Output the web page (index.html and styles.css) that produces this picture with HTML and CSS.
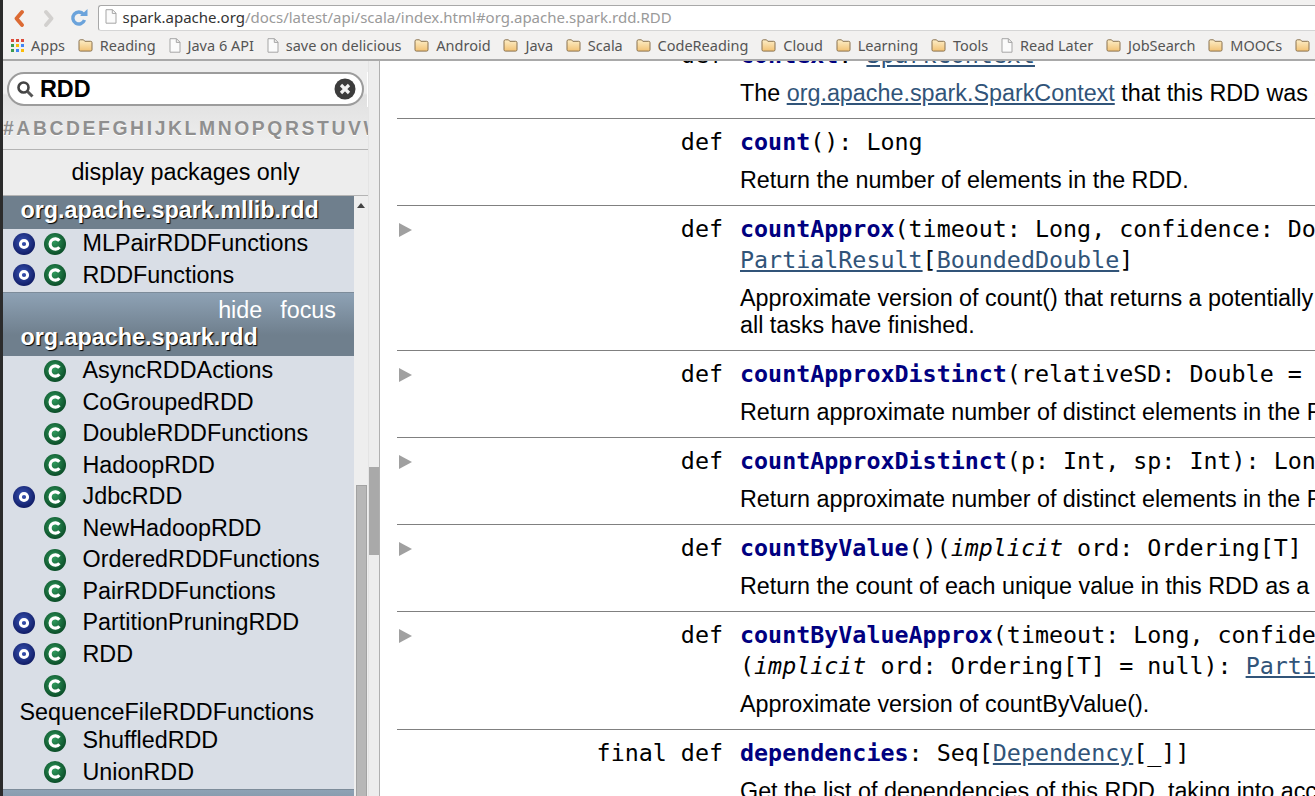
FILE: index.html
```html
<!DOCTYPE html>
<html lang="en">

<head>
    <meta charset="UTF-8">
    <title>org.apache.spark.rdd.RDD</title>
    <link rel="stylesheet" href="styles.css">
</head>

<body>
    <svg class="defs" width="0" height="0">
        <defs>
            <radialGradient id="blueBall" cx="45%" cy="40%" r="60%">
                <stop offset="0" stop-color="#3a55b5" />
                <stop offset="1" stop-color="#101c66" />
            </radialGradient>
            <radialGradient id="greenBall" cx="45%" cy="40%" r="60%">
                <stop offset="0" stop-color="#2f9a5c" />
                <stop offset="1" stop-color="#0b4d28" />
            </radialGradient>
            <linearGradient id="folderFill" x1="0" y1="0" x2="0" y2="1">
                <stop offset="0" stop-color="#fdeec8" />
                <stop offset="1" stop-color="#f2c274" />
            </linearGradient>
        </defs>
        <symbol id="icon-object" viewBox="0 0 22 22">
            <circle cx="11" cy="11" r="11" fill="url(#blueBall)" />
            <circle cx="11" cy="11" r="3.600" fill="none" stroke="#fff" stroke-width="3" />
        </symbol>
        <symbol id="icon-class" viewBox="0 0 22 22">
            <circle cx="11" cy="11" r="11" fill="url(#greenBall)" />
            <path d="M15.400 7.800a5.200 5.200 0 1 0 0 6.400" fill="none" stroke="#fff" stroke-width="3.200" />
        </symbol>
        <symbol id="icon-folder" viewBox="0 0 15 14">
            <path d="M1 3.200c0-.8.5-1.400 1.300-1.400h3.200l1.300 1.500h5.900c.8 0 1.300.5 1.300 1.300v7.200c0 .8-.5 1.300-1.300 1.300H2.300c-.8 0-1.300-.5-1.300-1.300z" fill="url(#folderFill)" stroke="#8a7350" />
        </symbol>
        <symbol id="icon-page" viewBox="0 0 12 15">
            <path d="M1 .7h6.500L11 4.200v10H1zM7.300 .7v3.700H11" fill="#fbfbfb" stroke="#a5a5a5" />
        </symbol>
    </svg>

    <header class="browser">
        <div class="toolbar">
            <svg class="nav-btn back" width="12" height="18" viewBox="0 0 12 18">
                <path d="M9 3 3.500 9.500 9 16" fill="none" stroke="#dc6a33" stroke-width="3.800" stroke-linecap="round" stroke-linejoin="round" />
            </svg>
            <svg class="nav-btn forward" width="12" height="18" viewBox="0 0 12 18">
                <path d="m3 3 5.500 6.500L3 16" fill="none" stroke="#d2d0ce" stroke-width="3.800" stroke-linecap="round" stroke-linejoin="round" />
            </svg>
            <svg class="nav-btn reload" width="18" height="18" viewBox="0 0 18 18">
                <path d="M13.500 5.200A6 6 0 1 0 14.500 11" fill="none" stroke="#6ba3db" stroke-width="3.400" />
                <path d="M10 7h7.500V0z" fill="#6ba3db" />
            </svg>
            <div class="address">
                <svg class="page-icon" width="12" height="15">
                    <use href="#icon-page" />
                </svg>
                <span class="host">spark.apache.org</span><span class="path">/docs/latest/api/scala/index.html#org.apache.spark.rdd.RDD</span>
            </div>
        </div>
        <nav class="bookmarks">
            <div class="mark apps">
                <svg width="13" height="13" viewBox="0 0 13 13">
                    <rect width="3" height="3" fill="#dd4b39" />
                    <rect x="5" width="3" height="3" fill="#dd4b39" />
                    <rect x="10" width="3" height="3" fill="#dd4b39" />
                    <rect y="5" width="3" height="3" fill="#3c9a4e" />
                    <rect x="5" y="5" width="3" height="3" fill="#fbbc05" />
                    <rect x="10" y="5" width="3" height="3" fill="#4285f4" />
                    <rect y="10" width="3" height="3" fill="#3c9a4e" />
                    <rect x="5" y="10" width="3" height="3" fill="#4285f4" />
                    <rect x="10" y="10" width="3" height="3" fill="#fbbc05" />
                </svg>
                Apps
            </div>
            <div class="mark"><svg class="folder"><use href="#icon-folder" /></svg>Reading</div>
            <div class="mark"><svg class="page"><use href="#icon-page" /></svg>Java 6 API</div>
            <div class="mark"><svg class="page"><use href="#icon-page" /></svg>save on delicious</div>
            <div class="mark"><svg class="folder"><use href="#icon-folder" /></svg>Android</div>
            <div class="mark"><svg class="folder"><use href="#icon-folder" /></svg>Java</div>
            <div class="mark"><svg class="folder"><use href="#icon-folder" /></svg>Scala</div>
            <div class="mark"><svg class="folder"><use href="#icon-folder" /></svg>CodeReading</div>
            <div class="mark"><svg class="folder"><use href="#icon-folder" /></svg>Cloud</div>
            <div class="mark"><svg class="folder"><use href="#icon-folder" /></svg>Learning</div>
            <div class="mark"><svg class="folder"><use href="#icon-folder" /></svg>Tools</div>
            <div class="mark"><svg class="page"><use href="#icon-page" /></svg>Read Later</div>
            <div class="mark"><svg class="folder"><use href="#icon-folder" /></svg>JobSearch</div>
            <div class="mark"><svg class="folder"><use href="#icon-folder" /></svg>MOOCs</div>
            <div class="mark"><svg class="folder"><use href="#icon-folder" /></svg></div>
        </nav>
    </header>

    <div class="layout">
        <aside class="sidebar">
            <div class="sidebar-main">
                <div class="filter">
                    <div class="search">
                        <svg width="18" height="18" viewBox="0 0 18 18">
                            <circle cx="7.500" cy="7.500" r="5" fill="none" stroke="#444" stroke-width="2.600" />
                            <path d="m11.500 11.500 5 5" stroke="#555" stroke-width="3" />
                        </svg>
                        <span class="query">RDD</span>
                        <svg class="clear" width="22" height="22" viewBox="0 0 22 22">
                            <circle cx="11" cy="11" r="10.500" fill="#3c3c3c" />
                            <path d="m7 7 8 8m0-8-8 8" stroke="#f2f2f2" stroke-width="3.200" />
                        </svg>
                    </div>
                    <div class="letters">#ABCDEFGHIJKLMNOPQRSTUVW</div>
                </div>
                <div class="display-only">display packages only</div>

                <div class="tree">
                    <div class="packages">
                        <div class="pack-name flat">org.apache.spark.mllib.rdd</div>
                        <ul class="entries">
                            <li><span class="icons"><svg class="ball"><use href="#icon-object" /></svg><svg class="ball"><use href="#icon-class" /></svg></span>MLPairRDDFunctions</li>
                            <li><span class="icons"><svg class="ball"><use href="#icon-object" /></svg><svg class="ball"><use href="#icon-class" /></svg></span>RDDFunctions</li>
                        </ul>
                        <div class="pack-head">
                            <div class="pack-links"><span>hide</span><span>focus</span></div>
                            <div class="pack-name">org.apache.spark.rdd</div>
                        </div>
                        <ul class="entries">
                            <li><span class="icons only-class"><svg class="ball"><use href="#icon-class" /></svg></span>AsyncRDDActions</li>
                            <li><span class="icons only-class"><svg class="ball"><use href="#icon-class" /></svg></span>CoGroupedRDD</li>
                            <li><span class="icons only-class"><svg class="ball"><use href="#icon-class" /></svg></span>DoubleRDDFunctions</li>
                            <li><span class="icons only-class"><svg class="ball"><use href="#icon-class" /></svg></span>HadoopRDD</li>
                            <li><span class="icons"><svg class="ball"><use href="#icon-object" /></svg><svg class="ball"><use href="#icon-class" /></svg></span>JdbcRDD</li>
                            <li><span class="icons only-class"><svg class="ball"><use href="#icon-class" /></svg></span>NewHadoopRDD</li>
                            <li><span class="icons only-class"><svg class="ball"><use href="#icon-class" /></svg></span>OrderedRDDFunctions</li>
                            <li><span class="icons only-class"><svg class="ball"><use href="#icon-class" /></svg></span>PairRDDFunctions</li>
                            <li><span class="icons"><svg class="ball"><use href="#icon-object" /></svg><svg class="ball"><use href="#icon-class" /></svg></span>PartitionPruningRDD</li>
                            <li><span class="icons"><svg class="ball"><use href="#icon-object" /></svg><svg class="ball"><use href="#icon-class" /></svg></span>RDD</li>
                            <li class="long"><span class="icons only-class"><svg class="ball"><use href="#icon-class" /></svg></span><span class="long-name">SequenceFileRDDFunctions</span></li>
                            <li><span class="icons only-class"><svg class="ball"><use href="#icon-class" /></svg></span>ShuffledRDD</li>
                            <li><span class="icons only-class"><svg class="ball"><use href="#icon-class" /></svg></span>UnionRDD</li>
                        </ul>
                        <div class="pack-head"></div>
                    </div>
                    <div class="tree-scroll">
                        <div class="up-arrow"></div>
                        <div class="tree-thumb"></div>
                    </div>
                </div>
            </div>
            <div class="outer-scroll">
                <div class="outer-thumb"></div>
            </div>
        </aside>

        <main class="content">
            <ol class="members">
                <li class="member">
                    <div class="kind"><span></span>def</div>
                    <div class="body">
                        <div class="sig"><b>context</b>: <a>SparkContext</a></div>
                        <div class="comment">The <a>org.apache.spark.SparkContext</a> that this RDD was created on.</div>
                    </div>
                </li>
                <li class="member">
                    <div class="kind"><span></span>def</div>
                    <div class="body">
                        <div class="sig"><b>count</b>(): Long</div>
                        <div class="comment">Return the number of elements in the RDD.</div>
                    </div>
                </li>
                <li class="member">
                    <div class="kind"><span class="arrow"></span>def</div>
                    <div class="body">
                        <div class="sig"><b>countApprox</b>(timeout: Long, confidence: Double = 0.95):</div>
                        <div class="sig"><a>PartialResult</a>[<a>BoundedDouble</a>]</div>
                        <div class="comment">Approximate version of count() that returns a potentially incomplete result within a timeout, even if not<br>all tasks have finished.</div>
                    </div>
                </li>
                <li class="member">
                    <div class="kind"><span class="arrow"></span>def</div>
                    <div class="body">
                        <div class="sig"><b>countApproxDistinct</b>(relativeSD: Double = 0.05): Long</div>
                        <div class="comment">Return approximate number of distinct elements in the RDD.</div>
                    </div>
                </li>
                <li class="member">
                    <div class="kind"><span class="arrow"></span>def</div>
                    <div class="body">
                        <div class="sig"><b>countApproxDistinct</b>(p: Int, sp: Int): Long</div>
                        <div class="comment">Return approximate number of distinct elements in the RDD.</div>
                    </div>
                </li>
                <li class="member">
                    <div class="kind"><span class="arrow"></span>def</div>
                    <div class="body">
                        <div class="sig"><b>countByValue</b>()(<i>implicit</i> ord: Ordering[T] = null): Map[T, Long]</div>
                        <div class="comment">Return the count of each unique value in this RDD as a local map of (value, count) pairs.</div>
                    </div>
                </li>
                <li class="member">
                    <div class="kind"><span class="arrow"></span>def</div>
                    <div class="body">
                        <div class="sig"><b>countByValueApprox</b>(timeout: Long, confidence: Double = 0.95)</div>
                        <div class="sig">(<i>implicit</i> ord: Ordering[T] = null): <a>PartialResult</a>[Map[T, BoundedDouble]]</div>
                        <div class="comment">Approximate version of countByValue().</div>
                    </div>
                </li>
                <li class="member">
                    <div class="kind"><span></span>final def</div>
                    <div class="body">
                        <div class="sig"><b>dependencies</b>: Seq[<a>Dependency</a>[_]]</div>
                        <div class="comment">Get the list of dependencies of this RDD, taking into account whether the RDD is checkpointed or not.</div>
                    </div>
                </li>
            </ol>
        </main>
    </div>
</body>

</html>
```
FILE: styles.css
```css
* {
    box-sizing: border-box;
}

html,
body {
    margin: 0;
    padding: 0;
    height: 796px;
    overflow: hidden;
}

body {
    font-family: "Liberation Sans", Arial, sans-serif;
    background-color: #fff;
    color: #000;
    border-left: 3px solid #2b2b2b;
}

ul,
ol {
    list-style: none;
    margin: 0;
    padding: 0;
}

.defs {
    display: block;
    height: 0;
}

/* browser chrome */
.browser {
    background-color: #f2f1f0;
    border-bottom: 2px solid #a9a9a9;
    height: 61px;
}

.toolbar {
    display: flex;
    align-items: center;
    height: 31px;
    padding-top: 4px;
}

.nav-btn {
    flex: none;
}

.back {
    margin-left: 10px;
}

.forward {
    margin-left: 18px;
}

.reload {
    margin-left: 15px;
}

.address {
    flex: 1;
    display: flex;
    align-items: center;
    height: 26px;
    margin-left: 10px;
    padding: 0 0 2px 6px;
    background-color: #fff;
    border: 1px solid #a8a8a8;
    border-bottom-color: #d5d5d5;
    border-right: none;
    border-radius: 3px 0 0 3px;
    font-family: "Noto Sans", sans-serif;
    font-size: 15px;
    white-space: nowrap;
}

.page-icon {
    flex: none;
    margin-right: 5.500px;
}

.host {
    color: #333;
}

.path {
    color: #9a9a9a;
}

.bookmarks {
    display: flex;
    align-items: center;
    gap: 12.800px;
    height: 28px;
    padding-left: 8px;
    font-family: "Noto Sans", sans-serif;
    font-size: 14.500px;
    color: #555;
    white-space: nowrap;
    overflow: hidden;
}

.mark {
    display: flex;
    align-items: center;
    gap: 7px;
    flex: none;
}

.folder {
    width: 15px;
    height: 14px;
}

.page {
    width: 12px;
    height: 15px;
}

.layout {
    display: flex;
    height: 735px;
}

/* left navigation */
.sidebar {
    flex: none;
    display: flex;
    width: 377px;
    height: 735px;
    background-color: #ededed;
    border-right: 1px solid #b0b0b0;
}

.sidebar-main {
    width: 365px;
    display: flex;
    flex-direction: column;
    overflow: hidden;
}

.filter {
    height: 89px;
    border-bottom: 1px solid #b4b4b4;
    background: linear-gradient(#fff, #fff) right 11px / 1px 35px no-repeat,
        linear-gradient(#eeeeee 0, #eeeeee 32px, #e0e0e0 34px, #ededed 80px);
    padding-top: 11px;
}

.search {
    display: flex;
    align-items: center;
    height: 34px;
    margin-left: 4px;
    width: 357px;
    padding: 0 6px 0 7px;
    background-color: #fff;
    border: 2px solid #9c9c9c;
    border-radius: 17px;
}

.query {
    flex: 1;
    margin-left: 6px;
    font-size: 23.330px;
    font-weight: bold;
}

.letters {
    margin-top: 12px;
    font-size: 19.330px;
    font-weight: bold;
    letter-spacing: 2.600px;
    color: #8f8f8f;
    text-shadow: 0 1px 0 #fff;
    white-space: nowrap;
}

.display-only {
    height: 46px;
    line-height: 44px;
    text-align: center;
    font-size: 23.330px;
    border-bottom: 1px solid #b4b4b4;
}

.tree {
    display: flex;
    flex: 1;
    min-height: 0;
}

.packages {
    width: 351px;
    background-color: #d9dee6;
}

.pack-name {
    height: 33px;
    line-height: 28px;
    padding-left: 17.500px;
    font-size: 23.330px;
    font-weight: bold;
    color: #fff;
    text-shadow: 1px 1px 1px #000;
}

.pack-name.flat {
    background-color: #6f7f8d;
}

.pack-head {
    height: 64px;
    background: linear-gradient(#8ea2b5 0, #6f7f8d 42px);
    border-top: 1px solid #7d8c9a;
}

.pack-links {
    display: flex;
    justify-content: flex-end;
    gap: 18px;
    height: 30px;
    padding-right: 18px;
    font-size: 23.330px;
    line-height: 34px;
    color: #fff;
}

.entries li {
    display: flex;
    flex-wrap: wrap;
    align-items: flex-start;
    height: 31.500px;
    font-size: 23.330px;
    line-height: 28px;
}

.entries li.long {
    height: 55px;
    align-content: flex-start;
}

.icons {
    display: flex;
    flex: none;
    gap: 8.500px;
    width: 79.500px;
    height: 29.500px;
    align-items: center;
    padding-left: 10px;
}

.icons.only-class {
    padding-left: 40.500px;
}

.long-name {
    width: 100%;
    margin-top: -1px;
    padding-left: 16.500px;
    line-height: 25px;
}

.ball {
    width: 22px;
    height: 22px;
    flex: none;
}

.tree-scroll {
    flex: 1;
    background-color: #eeeeee;
}

.up-arrow {
    width: 0;
    height: 0;
    margin: 7px 0 0 3px;
    border-left: 4px solid transparent;
    border-right: 4px solid transparent;
    border-bottom: 5px solid #444;
}

.tree-thumb {
    width: 11px;
    height: 320px;
    margin: 277px 0 0 2px;
    background-color: #b7b7b7;
    border: 1px solid #a2a2a2;
}

.outer-scroll {
    width: 11px;
    border-left: 1px solid #e4e4e4;
}

.outer-thumb {
    height: 88px;
    margin-top: 406px;
    background-color: #a9a9a9;
}

/* member list */
.content {
    flex: 1;
    min-width: 0;
    padding-left: 17px;
    overflow: hidden;
}

.members {
    margin-top: -29px;
}

.member {
    display: flex;
    padding: 8px 0 11px;
    border-bottom: 1px solid #808080;
}

.member:last-child {
    border-bottom: none;
}

.kind {
    flex: none;
    display: flex;
    justify-content: space-between;
    width: 326px;
    margin-right: 17px;
    font-family: "DejaVu Sans Mono", monospace;
    font-size: 23.330px;
    line-height: 31px;
}

.arrow {
    width: 0;
    height: 0;
    margin: 9px 0 0 2px;
    border-left: 13px solid #a0a0a0;
    border-top: 7.500px solid transparent;
    border-bottom: 7.500px solid transparent;
}

.body {
    white-space: nowrap;
}

.sig {
    font-family: "DejaVu Sans Mono", monospace;
    font-size: 23.330px;
    line-height: 31px;
}

.sig b {
    color: #000080;
}

.sig a,
.comment a {
    color: #315479;
    text-decoration: underline;
}

.comment {
    margin-top: 9px;
    font-size: 23.330px;
    line-height: 27px;
}
```
